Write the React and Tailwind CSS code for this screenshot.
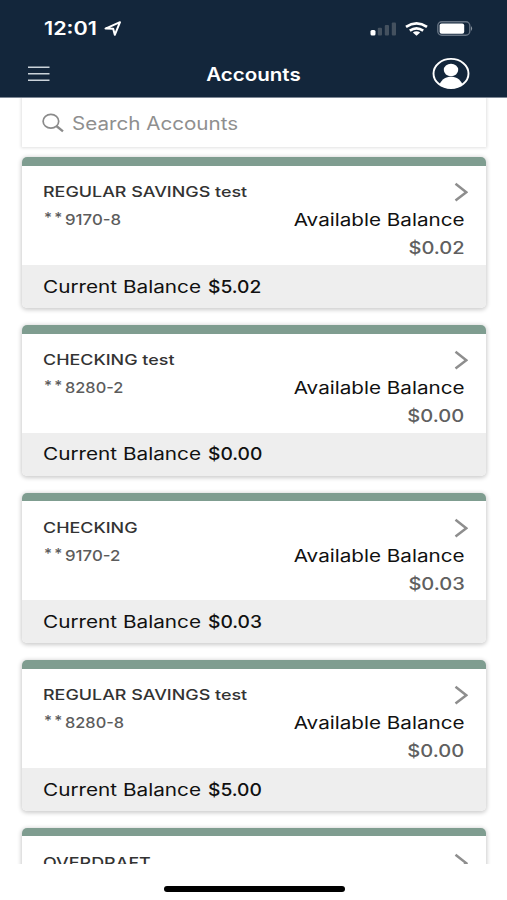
const accounts = [
  { name: "REGULAR SAVINGS test", number: "9170-8", available: "$0.02", current: "$5.02", numberScale: "scale-x-[1.12]" },
  { name: "CHECKING test", number: "8280-2", available: "$0.00", current: "$0.00", numberScale: "scale-x-[1.09]" },
  { name: "CHECKING", number: "9170-2", available: "$0.03", current: "$0.03", numberScale: "scale-x-[1.12]" },
  { name: "REGULAR SAVINGS test", number: "8280-8", available: "$0.00", current: "$5.00", numberScale: "scale-x-[1.09]" },
];

function StatusBar() {
  return (
    <div className="flex h-[56px] items-center justify-between pl-[44px] pr-[34px]">
      <div className="flex items-center text-white">
        <span className="mt-[2px] w-[60px] origin-left scale-x-[1.2] whitespace-nowrap text-[18px] font-semibold leading-none">12:01</span>
        <svg className="mt-[2px] h-[16px] w-[18px]" viewBox="0 0 18 16" fill="none" stroke="white" strokeWidth="2" strokeLinejoin="round">
          <path d="M1.5 7.6 L16 1.2 L10.8 13.8 L9.2 7.8 Z" />
        </svg>
      </div>
      <div className="flex items-center">
        <svg className="mt-[1px] h-[14px] w-[27px]" viewBox="0 0 27 14">
          <rect x="0.5" y="8" width="5" height="5.5" rx="1.5" fill="white" />
          <rect x="7.8" y="5.7" width="4.2" height="7.8" rx="1" fill="#44515f" />
          <rect x="14.8" y="3" width="4.2" height="10.5" rx="1" fill="#44515f" />
          <rect x="21.8" y="0.5" width="4.2" height="13" rx="1" fill="#44515f" />
        </svg>
        <svg className="ml-[8px] mt-[1px] h-[14px] w-[23px]" viewBox="0 0 23 14" fill="none" stroke="white" strokeWidth="2.7">
          <path d="M1 4.8 Q11.5 -2 22 4.8" />
          <path d="M4.8 8.6 Q11.5 4 18.2 8.6" />
          <path d="M7.8 10.6 Q11.5 8 15.2 10.6 L11.5 13.8 Z" fill="white" stroke="none" />
        </svg>
        <svg className="ml-[9px] mt-[1px] h-[15px] w-[36px]" viewBox="0 0 36 15">
          <rect x="0.8" y="0.8" width="32" height="13.4" rx="4" fill="none" stroke="#667383" strokeWidth="1.4" />
          <rect x="2.6" y="2.5" width="24.6" height="10.2" rx="2" fill="white" />
          <path d="M34 5 Q36.2 7.5 34 10 Z" fill="#8a949f" />
        </svg>
      </div>
    </div>
  );
}

function TitleBar() {
  return (
    <div className="grid h-[41px] grid-cols-[1fr_auto_1fr] items-start pl-[28px] pr-[37px]">
      <svg className="mt-[9px] h-[17px] w-[22px]" viewBox="0 0 22 17" stroke="#cbd3da" strokeWidth="1.5">
        <path d="M0 2.2 H21.5 M0 8.8 H21.5 M0 15.3 H21.5" />
      </svg>
      <h1 className="ml-[9px] mt-[9px] scale-x-[1.14] text-[18px] font-semibold leading-[20px] text-white">Accounts</h1>
      <svg className="mt-[1px] h-[33px] w-[38px] justify-self-end" viewBox="0 0 38 33">
        <ellipse cx="19" cy="16.5" rx="17.5" ry="14.6" fill="none" stroke="white" strokeWidth="1.9" />
        <ellipse cx="19" cy="13" rx="7.2" ry="6.2" fill="white" />
        <path d="M7.5 27.4 C10 22 14 19.8 19 19.8 C24 19.8 28 22 30.5 27.4 C24 32.6 14 32.6 7.5 27.4 Z" fill="white" />
      </svg>
    </div>
  );
}

function SearchBox() {
  return (
    <div className="mx-[21.5px] flex h-[48.5px] items-center bg-white pl-[20.5px] shadow-[0_0_3px_1px_rgba(0,0,0,0.12)]">
      <svg className="mt-[2px] h-[20px] w-[22px]" viewBox="0 0 22 20" fill="none" stroke="#8b8b8b" strokeWidth="1.7">
        <ellipse cx="8.9" cy="8.2" rx="7.8" ry="6.9" />
        <path d="M14.4 13 L21 18.4" strokeWidth="2.3" />
      </svg>
      <span className="ml-[8px] mt-[4px] origin-left scale-x-[1.145] whitespace-nowrap text-[18px] leading-none text-[#8f8f8f]">Search Accounts</span>
    </div>
  );
}

function Chevron() {
  return (
    <svg className="-mr-[3px] h-[28px] w-[14px]" viewBox="0 0 14 28" fill="none" stroke="#8e8e8e" strokeWidth="2.5">
      <path d="M1.5 5.8 L12.3 14.2 L1.5 22.6" />
    </svg>
  );
}

function AccountName({ children }) {
  return (
    <span className="origin-left scale-x-[1.235] whitespace-nowrap text-[14.5px] font-medium leading-[28px] text-[#333]">{children}</span>
  );
}

function AccountCard({ account }) {
  return (
    <article className="h-[150.6px] shrink-0 overflow-clip rounded-[5px] bg-white shadow-[0_1px_4px_1px_rgba(0,0,0,0.2)]">
      <div className="h-[8.6px] bg-[#7f9d90]" />
      <div className="flex h-[99px] justify-between px-[21px] pt-[12.4px]">
        <div className="flex flex-col items-start">
          <AccountName>{account.name}</AccountName>
          <span className="flex h-[28px] items-center text-[15px] font-medium leading-[28px] text-[#5c5c5c]">
            <span className="-mt-[4px] ml-[1px] w-[21px] origin-left scale-x-[1.1] text-[14px] tracking-[2px]">**</span>
            <span className={`origin-left whitespace-nowrap ${account.numberScale}`}>{account.number}</span>
          </span>
        </div>
        <div className="flex flex-col items-end">
          <Chevron />
          <span className="origin-right scale-x-[1.215] whitespace-nowrap text-[17px] leading-[28px] text-[#111]">Available Balance</span>
          <span className="origin-right scale-x-[1.18] whitespace-nowrap text-[17px] font-medium leading-[28px] text-[#606060]">{account.available}</span>
        </div>
      </div>
      <div className="flex h-[43px] items-center bg-[#eeeeee] pl-[21px] pt-[2px] text-[17px] text-[#111]">
        <span className="w-[165px] origin-left scale-x-[1.22] whitespace-nowrap">Current Balance</span>
        <span className="origin-left scale-x-[1.13] whitespace-nowrap font-medium">{account.current}</span>
      </div>
    </article>
  );
}

function PartialAccountCard({ name }) {
  return (
    <article className="h-[60px] shrink-0 overflow-clip rounded-t-[5px] bg-white shadow-[0_1px_4px_1px_rgba(0,0,0,0.2)]">
      <div className="h-[8.6px] bg-[#7f9d90]" />
      <div className="flex justify-between px-[21px] pt-[12.4px]">
        <AccountName>{name}</AccountName>
        <Chevron />
      </div>
    </article>
  );
}

export default function App() {
  return (
    <div className="flex h-[900px] w-[507px] flex-col overflow-hidden bg-white font-['Inter','Liberation_Sans',sans-serif]">
      <header className="h-[98px] shrink-0 border-b border-[#7d8795] bg-[#13263b]">
        <StatusBar />
        <TitleBar />
      </header>
      <main className="h-[765.5px] shrink-0 overflow-hidden">
        <SearchBox />
        <div className="mx-[21.5px] mt-[10.9px] flex flex-col gap-[17px]">
          {accounts.map((account, i) => (
            <AccountCard key={i} account={account} />
          ))}
          <PartialAccountCard name="OVERDRAFT" />
        </div>
      </main>
      <div className="flex flex-1 justify-center bg-white pt-[22.5px]">
        <div className="ml-px h-[5.5px] w-[181px] rounded-full bg-black" />
      </div>
    </div>
  );
}
